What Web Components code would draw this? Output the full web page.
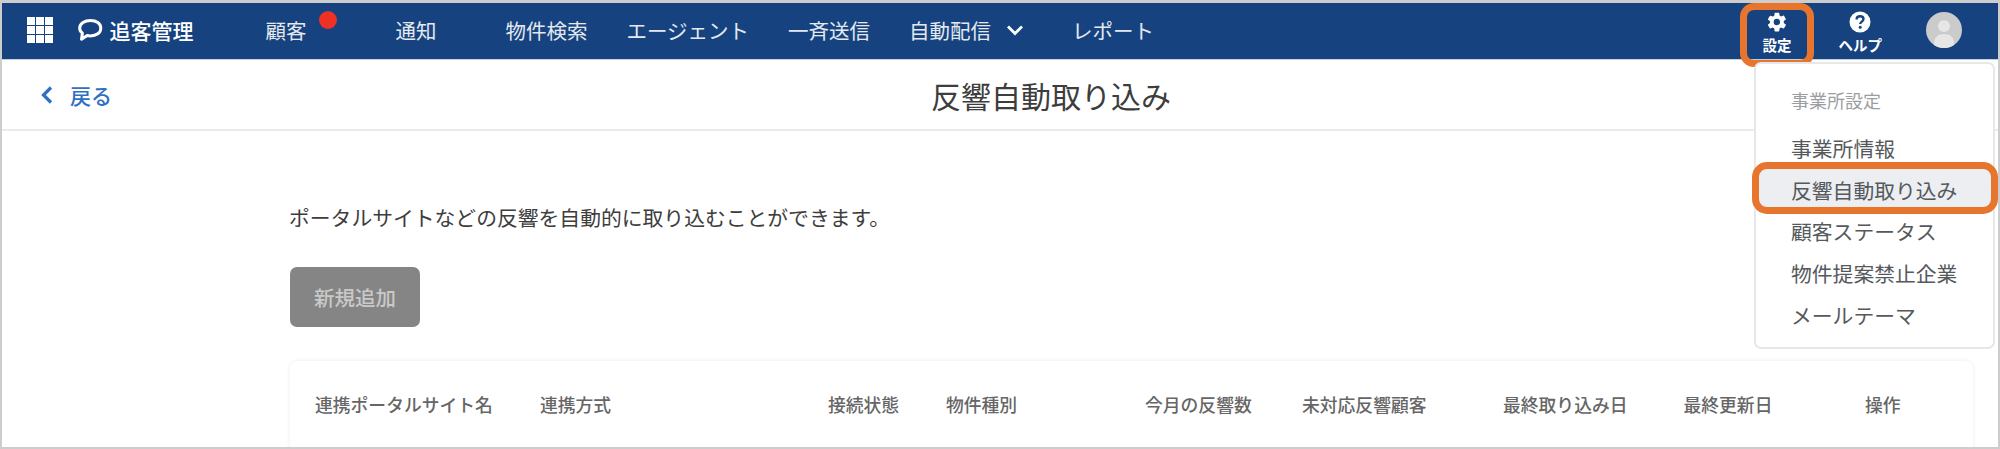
<!DOCTYPE html>
<html lang="ja">
<head>
<meta charset="utf-8">
<title>反響自動取り込み</title>
<style>
  html, body { margin: 0; height: 100%; background: #fff; overflow: hidden; }
  body { font-family: "Noto Sans CJK JP", "Liberation Sans", sans-serif; }
</style>
</head>
<body>
<app-frame>
  <top-bar slot="bar"></top-bar>
  <page-head slot="head" title-text="反響自動取り込み"></page-head>
  <settings-menu slot="menu"></settings-menu>
  <page-body slot="body"></page-body>
</app-frame>

<script>
class AppFrame extends HTMLElement{
    constructor(){
        super()
        const shadow = this.attachShadow({mode: "open"})
        shadow.innerHTML = `
        <style>
        :host{
            display: flex;
            flex-direction: column;
            position: relative;
            box-sizing: border-box;
            height: 449px;
            border: solid #cdcdcd;
            border-width: 3px 2px 2px 2px;
            overflow: hidden;
        }
        </style>
        <slot name="bar"></slot>
        <slot name="head"></slot>
        <slot name="body"></slot>
        <slot name="menu"></slot>
        `
    }
}
customElements.define("app-frame", AppFrame)

class NavLink extends HTMLElement{
    constructor(){
        super()
        const shadow = this.attachShadow({mode: "open"})
        shadow.innerHTML = `
        <style>
        :host{
            display: inline-flex;
            align-items: center;
            color: #e4e9f0;
            font-size: 20.5px;
            line-height: 1;
            white-space: nowrap;
        }
        </style>
        <slot></slot>
        `
    }
}
customElements.define("nav-link", NavLink)

class TopBar extends HTMLElement{
    constructor(){
        super()
        const shadow = this.attachShadow({mode: "open"})
        const cells = Array(9).fill('<i></i>').join("")
        shadow.innerHTML = `
        <style>
        :host{
            display: flex;
            align-items: center;
            flex: none;
            height: 54px;
            padding-bottom: 2px;
            background: #16437f;
            color: #fff;
            border-bottom: 1px solid #c4d0de;
        }
        .apps{
            display: grid;
            grid-template-columns: repeat(3, 7.5px);
            grid-auto-rows: 7.5px;
            gap: 1.5px;
            margin-left: 25px;
        }
        .apps i{ background: #fff; }
        .logo{
            display: flex;
            align-items: center;
            gap: 7px;
            margin-left: 25px;
            font-size: 21px;
            font-weight: 500;
            line-height: 1;
        }
        nav{
            display: flex;
            align-items: center;
            margin-left: 72px;
        }
        .customers{ position: relative; margin-right: 89px; }
        .dot{
            position: absolute;
            left: 53px;
            top: -9px;
            width: 18px;
            height: 18px;
            border-radius: 50%;
            background: #ee3124;
        }
        .m69{ margin-right: 69px; }
        .m39{ margin-right: 39px; }
        .m50{ margin-right: 48px; }
        .chev{ margin-left: 15px; }
        .tools{
            display: flex;
            align-items: center;
            margin-left: auto;
        }
        .tool{
            display: flex;
            flex-direction: column;
            align-items: center;
            gap: 5px;
            font-size: 14.5px;
            font-weight: 700;
            line-height: 1;
            margin-top: 4px;
            white-space: nowrap;
        }
        .set{ margin-right: 47px; }
        .help{ margin-right: 44px; }
        .avatar{ display: block; margin-right: 36px; }
        .mark{
            position: absolute;
            left: 1738px;
            top: 0;
            width: 60px;
            height: 50px;
            border: 7px solid #e8752e;
            border-radius: 14px;
        }
        </style>
        <div class="apps">${cells}</div>
        <div class="logo">
            <svg width="25" height="24" viewBox="0 0 25 24"><path d="M12.500 2.500c5.800 0 10.300 3 10.300 7.700s-4.500 7.700-10.300 7.700c-1.200 0-2.300-.1-3.300-.4l-5.700 3.700.9-6c-1.700-1.300-2.700-3-2.700-5 0-4.700 5-7.700 10.800-7.700z" fill="none" stroke="#fff" stroke-width="3" stroke-linejoin="round"/></svg>
            <span>追客管理</span>
        </div>
        <nav>
            <nav-link class="customers">顧客<span class="dot"></span></nav-link>
            <nav-link class="m69">通知</nav-link>
            <nav-link class="m39">物件検索</nav-link>
            <nav-link class="m39">エージェント</nav-link>
            <nav-link class="m39">一斉送信</nav-link>
            <nav-link class="m50">自動配信<svg class="chev" width="18" height="12" viewBox="0 0 18 12"><path d="M2 2.500l7 7 7-7" fill="none" stroke="#fff" stroke-width="2.800"/></svg></nav-link>
            <nav-link>レポート</nav-link>
        </nav>
        <div class="tools">
            <div class="tool set">
                <svg width="22" height="22" viewBox="0 0 24 24"><path fill="#fff" d="M19.400 13c.04-.32.06-.66.06-1s-.02-.68-.07-1l2.150-1.650a.5.5 0 0 0 .12-.64l-2.030-3.500a.5.5 0 0 0-.62-.22l-2.530 1a7.400 7.400 0 0 0-1.700-1l-.38-2.680A.5.5 0 0 0 13.900 2H9.900a.5.500 0 0 0-.5.430l-.38 2.680c-.62.250-1.180.600-1.700 1l-2.530-1a.5.500 0 0 0-.62.220L2.140 8.830a.5.500 0 0 0 .12.640L4.400 11.120c-.05.320-.07.660-.07 1s.02.680.07 1l-2.150 1.650a.5.500 0 0 0-.12.640l2.030 3.500c.13.220.39.300.62.220l2.530-1c.520.400 1.080.750 1.700 1l.38 2.680c.05.240.26.430.5.430h4c.250 0 .46-.190.5-.430l.38-2.680c.62-.250 1.180-.600 1.700-1l2.530 1c.23.090.49 0 .62-.220l2.030-3.500a.5.500 0 0 0-.12-.640zM11.900 15.500a3.500 3.500 0 1 1 0-7 3.500 3.500 0 0 1 0 7z"/></svg>
                <span>設定</span>
            </div>
            <div class="tool help">
                <svg width="22" height="22" viewBox="0 0 22 22"><circle cx="11" cy="11" r="10.500" fill="#fff"/><path d="M7.600 8.400c0-2 1.500-3.200 3.500-3.200s3.400 1.100 3.400 2.900c0 2.500-3.300 2.500-3.300 5" fill="none" stroke="#16437f" stroke-width="2.400"/><circle cx="11.200" cy="16.300" r="1.500" fill="#16437f"/></svg>
                <span>ヘルプ</span>
            </div>
            <svg class="avatar" width="36" height="36" viewBox="0 0 36 36"><defs><clipPath id="a"><circle cx="18" cy="18" r="18"/></clipPath></defs><circle cx="18" cy="18" r="18" fill="#cbcbcb"/><g clip-path="url(#a)" fill="#e6e6e6"><circle cx="18" cy="14" r="6"/><path d="M8 32c0-7 4-10 10-10s10 3 10 10v6H8z"/></g></svg>
        </div>
        <span class="mark"></span>
        `
    }
}
customElements.define("top-bar", TopBar)

class PageHead extends HTMLElement{
    constructor(){
        super()
        const shadow = this.attachShadow({mode: "open"})
        shadow.innerHTML = `
        <style>
        :host{
            display: flex;
            align-items: center;
            flex: none;
            height: 69px;
            border-bottom: 2px solid #e9ecee;
        }
        .back{
            display: flex;
            align-items: center;
            gap: 16px;
            margin-left: 38px;
            color: #2f6fc4;
            font-size: 21px;
            font-weight: 500;
            width: 891px;
        }
        h1{
            margin: 0;
            color: #3d3d3d;
            font-size: 30px;
            font-weight: 400;
            line-height: 1;
        }
        </style>
        <div class="back">
            <svg width="14" height="20" viewBox="0 0 14 20"><path d="M11 2.500L3.500 10l7.500 7.500" fill="none" stroke="#2f6fc4" stroke-width="3.200"/></svg>
            <span>戻る</span>
        </div>
        <h1></h1>
        `
        shadow.querySelector("h1").textContent = this.getAttribute("title-text")
    }
}
customElements.define("page-head", PageHead)

class SettingsMenu extends HTMLElement{
    constructor(){
        super()
        const shadow = this.attachShadow({mode: "open"})
        shadow.innerHTML = `
        <style>
        :host{
            position: absolute;
            top: 59px;
            right: 3px;
            box-sizing: border-box;
            width: 241px;
            height: 287px;
            padding-top: 23px;
            background: #fff;
            border: 2px solid #e5e7e9;
            border-radius: 7px;
            color: #55595c;
        }
        .label{
            height: 26px;
            margin: 0 0 15px 35px;
            color: #9a9ea2;
            font-size: 18px;
            line-height: 26px;
        }
        .item{
            height: 41.700px;
            padding-left: 35px;
            font-size: 20.800px;
            line-height: 41.700px;
            white-space: nowrap;
        }
        .on{
            position: relative;
            background: #eceef2;
            box-shadow: 0 -2px 0 #eceef2;
        }
        .on::after{
            content: "";
            position: absolute;
            left: -4px;
            right: -5px;
            top: -8px;
            bottom: -3px;
            border: 7px solid #e8752e;
            border-radius: 15px;
        }
        </style>
        <div class="label">事業所設定</div>
        <div class="item">事業所情報</div>
        <div class="item on">反響自動取り込み</div>
        <div class="item">顧客ステータス</div>
        <div class="item">物件提案禁止企業</div>
        <div class="item">メールテーマ</div>
        `
    }
}
customElements.define("settings-menu", SettingsMenu)

class PageBody extends HTMLElement{
    constructor(){
        super()
        const shadow = this.attachShadow({mode: "open"})
        const cols = ["連携ポータルサイト名","連携方式","接続状態","物件種別","今月の反響数","未対応反響顧客","最終取り込み日","最終更新日","操作"]
        shadow.innerHTML = `
        <style>
        :host{
            display: block;
            flex: 1;
            padding: 71px 25px 0 287px;
            color: #3d3d3d;
        }
        p{
            margin: 0;
            font-size: 20.800px;
            line-height: 30px;
        }
        button{
            display: block;
            width: 130px;
            height: 60px;
            margin: 35px 0 0 1px;
            padding: 0;
            border: 0;
            border-radius: 7px;
            background: #858585;
            color: #c9c9c9;
            font: inherit;
            font-size: 20.500px;
            font-weight: 500;
        }
        .card{
            display: grid;
            grid-template-columns: 225px 288px 118px 199px 157px 201px 180.500px 181.500px 1fr;
            align-items: center;
            height: 120px;
            margin: 34px 0 0 1px;
            padding: 0 0 34px 25px;
            box-sizing: border-box;
            border-radius: 8px;
            background: #fff;
            box-shadow: 0 0 5px rgba(0,0,0,.08);
            color: #666;
            font-size: 17.800px;
            font-weight: 500;
            white-space: nowrap;
        }
        </style>
        <p>ポータルサイトなどの反響を自動的に取り込むことができます。</p>
        <button type="button">新規追加</button>
        <div class="card">${cols.map(c => `<span>${c}</span>`).join("")}</div>
        `
    }
}
customElements.define("page-body", PageBody)
</script>
</body>
</html>
